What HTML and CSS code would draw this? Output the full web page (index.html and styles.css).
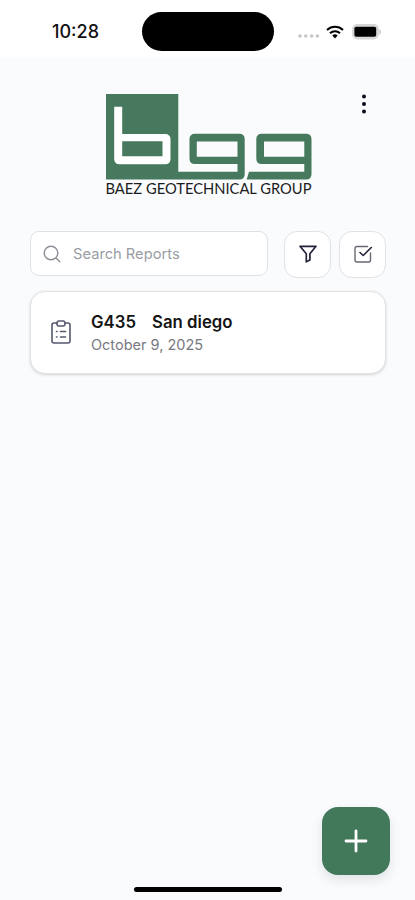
FILE: index.html
```html
<!DOCTYPE html>
<html lang="en">

    <head>
        <meta charset="UTF-8">
        <title>Reports</title>
        <meta name="viewport" content="width=device-width, initial-scale=1.0">
        <link rel="stylesheet" href="styles.css">
    </head>

    <body>
        <div class="status-bar">
            <span class="time">10:28</span>
            <div class="island"></div>
            <div class="status-icons">
                <svg class="signal" width="22" height="4" viewBox="0 0 22 4" fill="#c6c6c6">
                    <circle cx="2" cy="2" r="1.8" />
                    <circle cx="7.8" cy="2" r="1.8" />
                    <circle cx="13.6" cy="2" r="1.8" />
                    <circle cx="19.4" cy="2" r="1.8" />
                </svg>
                <svg class="wifi" width="18" height="14" viewBox="0 0 18 14" fill="none" stroke="#000" stroke-width="2.1">
                    <path d="M1 4.9a11.6 11.6 0 0 1 16 0" />
                    <path d="M4 8.3a7.3 7.3 0 0 1 10 0" />
                    <path d="M9 13.4 6.3 10.6a4 4 0 0 1 5.4 0z" fill="#000" stroke="none" />
                </svg>
                <svg class="battery" width="30" height="16" viewBox="0 0 30 16">
                    <rect x="1" y="1" width="25" height="13.6" rx="4.2" fill="#ddd" stroke="#d6d6d6" stroke-width="1.8" />
                    <rect x="2.4" y="2.8" width="21.8" height="10" rx="1.8" />
                    <path d="M27.4 5.2c2.2.8 2.2 4.6 0 5.4z" fill="#c8c8c8" />
                </svg>
            </div>
        </div>

        <header class="header">
            <svg class="logo" width="208" height="104" viewBox="0 0 208 104">
                <g fill="#46795d">
                    <path d="M0 0h72.3v85.5H0z" />
                    <path fill-rule="evenodd" d="M72 77.7h59.5V70H89q-5.5 0-5.5-5.5V45.2q0-5.5 5.5-5.5h44.2q5.5 0 5.5 5.5V80q0 5.5-5.5 5.5H72zM90.8 47.5v15.2h40.7V47.5z" />
                    <path fill-rule="evenodd" d="M143 77.7h55.3V70h-42.5q-5.5 0-5.5-5.5V45.2q0-5.5 5.5-5.5h44.2q5.5 0 5.5 5.5V80q0 5.5-5.5 5.5H140.7zM158 47.5v15.2h40.3V47.5z" />
                </g>
                <path fill="#fff" fill-rule="evenodd" d="M8.2 12.8h8v27.1H59q5.5 0 5.5 5.5v19.3q0 5.500-5.500 5.500H13.700q-5.500 0-5.500-5.500zM16.200 47.300v15h40.300v-15z" />
                <text class="logo-text" x="-0.5" y="100.3" textLength="206" lengthAdjust="spacingAndGlyphs">BAEZ GEOTECHNICAL GROUP</text>
            </svg>
            <button class="menu" aria-label="Menu">
                <svg width="6" height="20" viewBox="0 0 6 20" fill="#0b0b1c">
                    <circle cx="3" cy="2.6" r="2" />
                    <circle cx="3" cy="10" r="2" />
                    <circle cx="3" cy="17.4" r="2" />
                </svg>
            </button>
        </header>

        <main class="content">
            <div class="toolbar">
                <div class="search">
                    <svg width="18" height="18" viewBox="0 0 18 18" fill="none" stroke="#8c9096" stroke-width="1.4" stroke-linecap="round">
                        <circle cx="8" cy="8" r="6.8" />
                        <path d="m13 13 3.800 3.800" />
                    </svg>
                    <input type="text" class="search-input" placeholder="Search Reports">
                </div>
                <button class="icon-button" aria-label="Filter">
                    <svg width="20" height="20" viewBox="0 0 20 20" fill="none" stroke="#23233a" stroke-width="1.7" stroke-linejoin="round">
                        <path d="M2 2.300h16l-6.100 7.500v6.200l-3.600 1.800v-8z" />
                    </svg>
                </button>
                <button class="icon-button" aria-label="Select">
                    <svg width="20" height="20" viewBox="0 0 20 20" fill="none" stroke-linecap="round" stroke-linejoin="round">
                        <path d="M14.500 2.500H4a2 2 0 0 0-2 2v11.500a2 2 0 0 0 2 2h11.500a2 2 0 0 0 2-2V9" stroke="#686874" stroke-width="1.4" />
                        <path d="m7 8.500 3.200 3L18.300 3.500" stroke="#23233a" stroke-width="1.6" />
                    </svg>
                </button>
            </div>

            <div class="report">
                <svg class="report-icon" width="20" height="24" viewBox="0 0 20 24" fill="none" stroke="#55596f" stroke-width="1.6" stroke-linecap="round" stroke-linejoin="round">
                    <path d="M6 3H3a2 2 0 0 0-2 2v16a2 2 0 0 0 2 2h14a2 2 0 0 0 2-2V5a2 2 0 0 0-2-2h-3" />
                    <path d="M7.200 1h5.600L14 2.200v2.600L12.800 6H7.200L6 4.800V2.200z" />
                    <path d="M5.500 11.500h.5M9.500 11.500h5M5.500 17h.5M9.500 17h5" />
                </svg>
                <div>
                    <div class="report-title"><span>G435</span><span>San diego</span></div>
                    <div class="report-date">October 9, 2025</div>
                </div>
            </div>
        </main>

        <button class="add" aria-label="Add report">
            <svg width="24" height="24" viewBox="0 0 24 24" stroke="#fff" stroke-width="2.8" stroke-linecap="round">
                <path d="M12 2v20M2 12h20" />
            </svg>
        </button>
        <div class="home-indicator"></div>
    </body>

</html>
```
FILE: styles.css
```css
* {
    box-sizing: border-box;
}

body {
    display: flex;
    flex-direction: column;
    height: 900px;
    margin: 0;
    overflow: hidden;
    background: #f9fbfd;
    font-family: Inter, "Liberation Sans", sans-serif;
}

button {
    padding: 0;
    border: none;
    background: none;
}

svg {
    display: block;
    flex-shrink: 0;
}

.status-bar {
    display: flex;
    align-items: center;
    height: 58px;
    padding: 5px 0 0 52px;
    background: #fff;
}

.time {
    width: 90px;
    font-size: 18px;
    font-weight: 500;
    color: #111;
}

.island {
    width: 132px;
    height: 39px;
    border-radius: 20px;
    background: #000;
}

.status-icons {
    display: flex;
    align-items: center;
    margin-left: 24px;
}

.signal {
    margin-top: 9px;
}

.wifi {
    margin-left: 6px;
}

.battery {
    margin-left: 8px;
}

.header {
    display: flex;
    justify-content: flex-end;
    align-items: flex-start;
    padding: 36px 45px 0 0;
    height: 173px;
}

.logo {
    overflow: visible;
}

.logo-text {
    font-family: Lato, sans-serif;
    font-size: 14.5px;
    fill: #1c1c1c;
}

.menu {
    width: 12px;
    margin-left: 44px;
    padding: 0 3px;
}

.content {
    padding: 0 29px 0 30px;
}

.toolbar {
    display: flex;
    gap: 8px;
}

.search {
    display: flex;
    align-items: center;
    gap: 12px;
    width: 238px;
    height: 45px;
    margin-right: 8px;
    padding: 0 12px;
    border: 1px solid #dfe1e4;
    border-radius: 9px;
    background: #fff;
}

.search-input {
    width: 100%;
    padding: 0;
    border: none;
    outline: none;
    background: none;
    font-family: inherit;
    font-size: 14.7px;
}

.search-input::placeholder {
    color: #999da3;
}

.icon-button {
    display: flex;
    align-items: center;
    justify-content: center;
    width: 47px;
    height: 47px;
    padding-bottom: 1px;
    border: 1px solid #e0e2e5;
    border-radius: 13px;
    background: #fff;
}

.report {
    display: flex;
    align-items: center;
    gap: 20px;
    height: 83px;
    margin-top: 13px;
    padding: 0 20px;
    border: 1px solid #e0e2e4;
    border-radius: 15px;
    background: #fff;
    box-shadow: 0 1px 3px rgba(0, 0, 0, 0.16);
}

.report-icon {
    margin-bottom: 2px;
}

.report-title {
    display: flex;
    gap: 16px;
    font-size: 16.8px;
    font-weight: 600;
    line-height: 24px;
    color: #141414;
}

.report-date {
    font-size: 14.5px;
    line-height: 22px;
    color: #777a7f;
}

.add {
    position: absolute;
    right: 25px;
    bottom: 25px;
    display: flex;
    align-items: center;
    justify-content: center;
    width: 68px;
    height: 68px;
    border-radius: 16px;
    background: #43795b;
    box-shadow: 0 5px 12px rgba(0, 0, 0, 0.1);
}

.home-indicator {
    width: 148px;
    height: 5px;
    margin: auto 0 8px 134px;
    border-radius: 3px;
    background: #000;
}
```
